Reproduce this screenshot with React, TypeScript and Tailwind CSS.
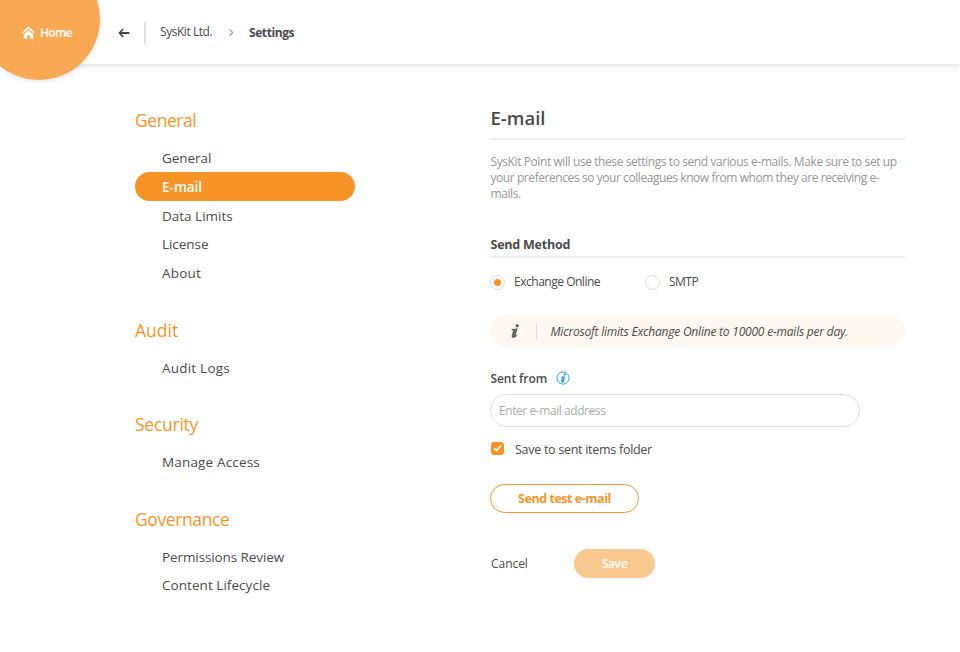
import type { ReactNode } from 'react';

type Item = { label: string; cls: string; active?: boolean };

const groups: { title: string; cls: string; items: Item[] }[] = [
  {
    title: 'General',
    cls: 'tracking-[-0.45px] leading-[27px]',
    items: [
      { label: 'General', cls: 'leading-[29px] tracking-[-0.05px]' },
      { label: 'E-mail', cls: 'leading-[30px] tracking-[0px]', active: true },
      { label: 'Data Limits', cls: 'leading-[30px] tracking-[0px]' },
      { label: 'License', cls: 'leading-[29px] tracking-[-0.05px]' },
      { label: 'About', cls: 'leading-[29px] tracking-[0.2px]' },
    ],
  },
  {
    title: 'Audit',
    cls: 'tracking-[0px] leading-[28px]',
    items: [{ label: 'Audit Logs', cls: 'leading-[31px] tracking-[0.22px]' }],
  },
  {
    title: 'Security',
    cls: 'tracking-[-0.25px] leading-[27px]',
    items: [{ label: 'Manage Access', cls: 'leading-[31px] tracking-[0.17px]' }],
  },
  {
    title: 'Governance',
    cls: 'tracking-[-0.4px] leading-[28px]',
    items: [
      { label: 'Permissions Review', cls: 'leading-[32px] tracking-[-0.1px]' },
      { label: 'Content Lifecycle', cls: 'leading-[31px] tracking-[0.05px]' },
    ],
  },
];

function Header() {
  return (
    <header className="relative flex h-[64px] items-center bg-white pt-px shadow-[0_2px_5px_rgba(0,0,0,0.11)]">
      <div className="absolute -left-[22px] -top-[42px] size-[122px] rounded-full bg-[#f9a954] shadow-[0_1px_6px_rgba(0,0,0,0.12)]" />
      <a className="relative flex w-[118px] items-center pl-[22px] text-[12px] font-semibold text-white">
        <svg width="13" height="13" viewBox="0 0 13 13" fill="none" className="mr-[5px]">
          <path d="M.8 7 6.5 1.4 12.2 7" stroke="currentColor" strokeWidth="1.7" />
          <path d="M6.5 4.2 11.2 8.8v3.9H7.8V9.3H5.2v3.4H1.8V8.8z" fill="currentColor" />
        </svg>
        <span className="tracking-[-0.65px]">Home</span>
      </a>
      <svg width="12" height="10" viewBox="0 0 12 10" fill="none" stroke="#4a4a4a" strokeWidth="1.8">
        <path d="M11.5 5H2M5.2 1 1.5 5 5.2 9" />
      </svg>
      <span className="ml-[14px] h-[22px] w-[2px] bg-[#e2e2e2]" />
      <span className="-mt-[2px] ml-[14px] w-[69px] text-[12px] tracking-[-0.45px]">SysKit Ltd.</span>
      <svg width="5" height="7" viewBox="0 0 5 7" fill="none" stroke="#a0a0a0" strokeWidth="1.2" className="mr-[15px]">
        <path d="M.5.5 3.7 3.5.5 6.5" />
      </svg>
      <span className="text-[12px] font-bold tracking-[-0.42px]">Settings</span>
    </header>
  );
}

function Sidebar() {
  return (
    <nav className="flex w-[221px] flex-col gap-[28.8px]">
      {groups.map((g) => (
        <section key={g.title}>
          <h2 className={`mb-[8.6px] h-7 text-[17.5px] text-[#f79428] ${g.cls}`}>{g.title}</h2>
          {g.items.map((i) => (
            <div
              key={i.label}
              className={`h-[28.8px] w-[220.4px] rounded-full pl-[27px] text-[13.5px] ${i.cls} ${i.active ? 'bg-[#f79428] font-semibold text-white' : ''}`}
            >
              {i.label}
            </div>
          ))}
        </section>
      ))}
    </nav>
  );
}

function Radio({ on, children, cls }: { on?: boolean; children: ReactNode; cls: string }) {
  return (
    <label className={`flex items-center ${cls}`}>
      <span className="mr-[9px] flex size-[15px] items-center justify-center rounded-full border border-[#dcdcdc]">
        {on && <span className="size-[7px] rounded-full bg-[#f79428]" />}
      </span>
      {children}
    </label>
  );
}

function InfoGlyph() {
  return (
    <>
      <circle cx="7.2" cy="1.7" r="1.7" />
      <path d="M1.6 5.1Q4.5 4.7 7.6 4.2L5.8 11Q5.6 12 7.2 10.5L7.7 11Q5.6 14 3.1 13.9 1.1 13.7 1.7 11.4L3 6.7Q3.1 6 1.5 5.9z" />
    </>
  );
}

export default function App() {
  return (
    <div className="h-[652px] w-[960px] overflow-hidden bg-white font-['Open_Sans','Noto_Sans',sans-serif] text-[#4a4a4a]">
      <Header />
      <div className="flex items-start pl-[135px] pt-[43px]">
        <Sidebar />
        <main className="ml-[134px] flex w-[415px] flex-col items-start">
          <h1 className="h-[31px] pl-[0.5px] text-[18.5px] font-semibold leading-[22px] tracking-[0px]">E-mail</h1>
          <div className="h-[2px] w-full bg-[#eee]" />
          <p className="mt-[14px] pl-[0.5px] text-[12px] leading-4 tracking-[-0.41px] text-[#979797]">
            <span className="block whitespace-nowrap">SysKit Point will use these settings to send various e-mails. Make sure to set up</span>
            <span className="block whitespace-nowrap tracking-[-0.43px]">your preferences so your colleagues know from whom they are receiving e-</span>
            <span className="block">mails.</span>
          </p>
          <h2 className="mt-[32px] h-[22px] pl-[0.5px] text-[12.5px] font-bold leading-[22px] tracking-[-0.22px]">Send Method</h2>
          <div className="h-[2px] w-full bg-[#eee]" />
          <div className="mt-[14px] flex h-5 text-[12px]">
            <Radio on cls="w-[155px] tracking-[-0.48px]">Exchange Online</Radio>
            <Radio cls="tracking-[-0.5px]">SMTP</Radio>
          </div>
          <div className="mt-[23px] flex h-8 w-full items-center rounded-full bg-[#fff8f1] pl-[20px]">
            <svg width="10" height="15" viewBox="0 0 10 15" fill="#666"><InfoGlyph /></svg>
            <span className="ml-[16px] h-[15px] w-px bg-[#e0dcd8]" />
            <span className="ml-[13.5px] whitespace-nowrap pt-[2px] text-[12px] italic tracking-[-0.21px]">Microsoft limits Exchange Online to 10000 e-mails per day.</span>
          </div>
          <div className="mt-[21px] flex h-5 items-center text-[12px] font-semibold">
            <span className="w-[65.5px] pl-[0.5px] pt-[2px] tracking-[-0.08px]">Sent from</span>
            <svg width="14" height="14" viewBox="0 0 14 14">
              <circle cx="7" cy="7" r="6.1" fill="none" stroke="#2ba6e8" />
              <g transform="translate(3.9 2.3) scale(.68)" fill="#2b9fe0"><InfoGlyph /></g>
            </svg>
          </div>
          <input
            className="mt-[6px] h-[33px] w-[370px] rounded-full border border-[#dedede] px-2 text-[12px] tracking-[-0.43px] outline-none placeholder:text-[#adadad]"
            placeholder="Enter e-mail address"
          />
          <label className="mt-[12px] flex h-5 items-center text-[12.5px]">
            <span className="mb-[2px] mr-[11px] ml-[1px] flex size-[13px] items-center justify-center rounded-[3px] bg-[#f79428]">
              <svg width="9" height="8" viewBox="0 0 9 8" fill="none" stroke="#fff" strokeWidth="1.7"><path d="M1 4.2 3.4 6.5 8 1.5" /></svg>
            </span>
            <span className="pt-[2px] tracking-[-0.28px]">Save to sent items folder</span>
          </label>
          <button className="mt-[25px] h-[29px] w-[149px] rounded-full border border-[#f79428] pt-px text-[12.5px] font-bold tracking-[-0.46px] text-[#f79428]">Send test e-mail</button>
          <div className="mt-[36px] flex h-[29px] items-center text-[12px]">
            <span className="w-[84px] pl-px tracking-[-0.05px]">Cancel</span>
            <button className="h-[29px] w-[81px] rounded-full bg-[#fac990] font-semibold tracking-[-0.3px] text-white">Save</button>
          </div>
        </main>
      </div>
    </div>
  );
}
